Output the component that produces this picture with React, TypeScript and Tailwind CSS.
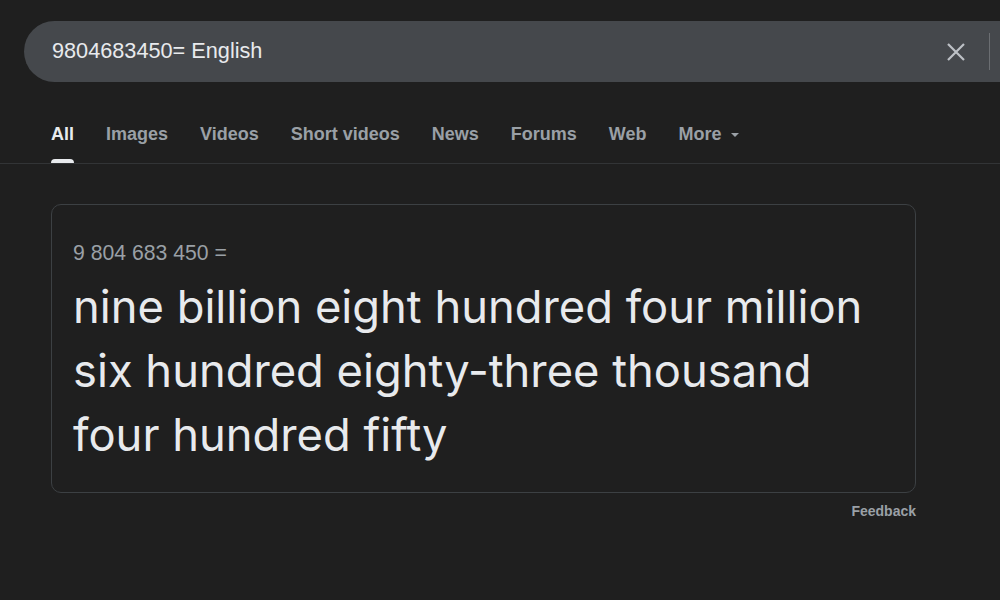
const tabs = ['All', 'Images', 'Videos', 'Short videos', 'News', 'Forums', 'Web']

export default function App() {
  return (
    <div className="w-[1000px] h-[600px] overflow-hidden bg-[#1f1f1f] font-['Liberation_Sans',Arial,sans-serif]">
      {/* Search bar */}
      <div className="pt-[21px] pl-[24px]">
        <div className="w-[1040px] h-[61px] rounded-full bg-[#45484c] flex items-center pl-[28px]">
          <span className="text-[21.7px] text-[#e8eaed] flex-1">9804683450= English</span>
          <svg width="20" height="20" viewBox="0 0 20 20" className="mr-[23px]">
            <path d="M2 2L18 18M18 2L2 18" stroke="#bdc1c6" strokeWidth="2.2" />
          </svg>
          <div className="w-px h-[37px] bg-[#6b6e72] mr-[74px]" />
        </div>
      </div>

      {/* Tabs */}
      <div className="mt-[40px] border-b border-[#323436] pl-[51px] flex gap-[32px] h-[42px]">
        {tabs.map((t, i) => (
          <div key={t} className="flex flex-col">
            <span className={`text-[18px] leading-[24px] font-semibold ${i === 0 ? 'text-[#e8eaed]' : 'text-[#9aa0a6]'}`}>{t}</span>
            {i === 0 && <div className="mt-auto h-[4px] rounded-t-sm bg-[#e8eaed]" />}
          </div>
        ))}
        <div className="flex items-start gap-[8px]">
          <span className="text-[18px] leading-[24px] font-semibold text-[#9aa0a6]">More</span>
          <svg width="10" height="24" viewBox="0 0 10 24"><path d="M1 11l4 4 4-4z" fill="#9aa0a6" /></svg>
        </div>
      </div>

      {/* Card */}
      <div className="pl-[51px] pt-[40px]">
        <div className="w-[865px] h-[289px] rounded-[10px] border border-[#3c4043] px-[21px] pt-[36px]">
          <div className="text-[21.2px] leading-[24px] text-[#9aa0a6]">9 804 683 450 =</div>
          <div className="mt-[10px] text-[45.3px] leading-[64px] text-[#e8eaed] font-['Inter',sans-serif]">
            nine billion eight hundred four million six hundred eighty-three thousand four hundred fifty
          </div>
        </div>
        <div className="w-[865px] text-right mt-[8px] text-[14px] text-[#9aa0a6] font-semibold">Feedback</div>
      </div>
    </div>
  )
}
